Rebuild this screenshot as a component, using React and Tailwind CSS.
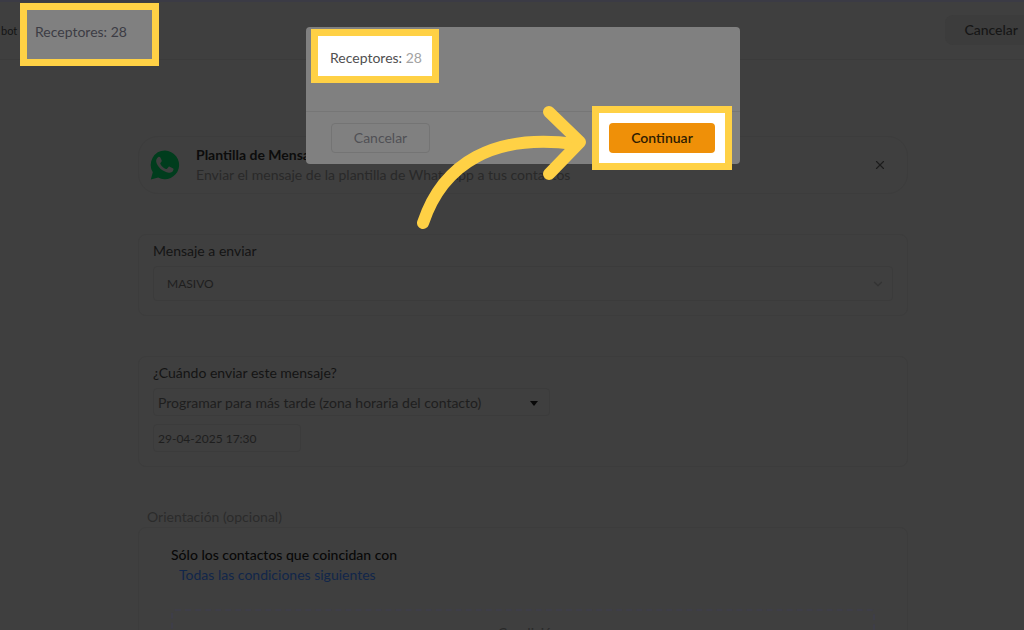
import { ChevronDown, X } from 'lucide-react';

const CARD = 'border border-[#3c3c3c] rounded-lg';
const FIELD = 'border border-[#3b3b3b] rounded bg-transparent text-[#1e1e1e] appearance-none';

const Header = () => (
  <header className="flex items-start h-[60px] border-t-2 border-t-[#3b3b45] border-b border-b-[#3b3b3b]">
    <span className="w-5 shrink-0 pt-[21px] pl-px text-[11px] leading-4 text-[#141414]">bot</span>
    {/* Highlighted counter, hangs a little below the header */}
    <div className="mt-px w-[139px] h-[63px] shrink-0 border-7 border-[#ffd145] bg-[#808080] pl-2 pt-3 leading-5 text-[#3c3c44]">
      Receptores: 28
    </div>
    <button className="ml-auto mt-[13px] h-[30px] rounded-l-lg bg-[#3c3c3c] pl-[19px] pr-1.5 font-medium text-[#161616]">
      Cancelar
    </button>
  </header>
);

const WhatsAppLogo = () => (
  <svg className="w-[30px] h-[30px] shrink-0" viewBox="0 0 30 30" aria-hidden="true">
    <path
      fill="#003d1d"
      d="M15 .6a14.300 14.300 0 1 1-6.800 27L.8 29.400l2-7.200A14.300 14.300 0 0 1 15 .6z"
    />
    <path
      fill="#3f3f3f"
      d="M8 7.200c.8-.6 2-.5 2.500.5l1.100 2.500c.3.700.1 1.200-.3 1.700l-.9 1.100c-.2.300-.2.600 0 1 1.300 2.400 3.100 4 5.600 5 .4.200.7.100 1-.2l1.500-1.800c.3-.4.700-.5 1.200-.3l3.100 1.500c.6.300.8.700.7 1.300-.4 2.300-2.500 3.500-4.700 3.200C12.800 21.800 7.300 17.200 6.200 11.800c-.3-1.800.4-3.500 1.800-4.600z"
    />
  </svg>
);

const MessageHeader = () => (
  <section className="flex items-center h-[58px] border border-[#3c3c3c] rounded-[20px] pl-[11px] pr-5">
    <WhatsAppLogo />
    <div className="ml-4 min-w-0">
      <h2 className="leading-5 font-bold text-[#0c0c0c] whitespace-nowrap">Plantilla de Mensaje de WhatsApp</h2>
      <p className="leading-5 text-[#292929] whitespace-nowrap">
        Enviar el mensaje de la plantilla de WhatsApp a tus contactos
      </p>
    </div>
    <button className="ml-auto" aria-label="Cerrar">
      <X size={14} strokeWidth={2} className="text-[#1c1c1c]" />
    </button>
  </section>
);

const MessageSelect = () => (
  <section className={`${CARD} mt-10 px-3.5 pt-1.5 pb-3.5`}>
    <label htmlFor="mensaje" className="block leading-5 text-[#141414]">
      Mensaje a enviar
    </label>
    <div className="relative mt-[5px]">
      <select id="mensaje" className={`${FIELD} w-full h-[35px] px-[13px] text-xs`}>
        <option>MASIVO</option>
      </select>
      <ChevronDown size={14} className="absolute right-2 top-[11px] text-[#333333] pointer-events-none" />
    </div>
  </section>
);

const Schedule = () => (
  <section className={`${CARD} mt-10 px-3.5 pt-1.5 pb-3.5`}>
    <label htmlFor="cuando" className="block leading-5 text-[#141414]">
      ¿Cuándo enviar este mensaje?
    </label>
    <div className="relative mt-[5px] w-[397px]">
      <select id="cuando" className={`${FIELD} block w-full h-7 px-1 pt-0.5 text-sm`}>
        <option>Programar para más tarde (zona horaria del contacto)</option>
      </select>
      <svg className="absolute right-3 top-[13px] w-2 h-[5px] pointer-events-none" viewBox="0 0 8 5">
        <path d="M0 0h8L4 5z" fill="#080808" />
      </svg>
    </div>
    <input
      type="text"
      aria-label="Fecha y hora"
      defaultValue="29-04-2025 17:30"
      className={`${FIELD} block mt-2 w-[148px] h-7 px-1 text-xs`}
    />
  </section>
);

const Targeting = () => (
  <section>
    <h3 className="mt-10 pl-[9px] leading-5 text-[#2b2b2b]">Orientación (opcional)</h3>
    <div className={`${CARD} px-8 pt-[17px]`}>
      <p className="leading-5 font-medium text-[#080808]">Sólo los contactos que coincidan con</p>
      <a href="#condiciones" className="block w-fit pl-2 leading-5 text-[#11264a]">
        Todas las condiciones siguientes
      </a>
      <div className="mt-6 h-20 border-2 border-dashed border-[#3e3e48] rounded pt-3 text-center leading-5">
        <button className="text-[#292929]">+ Condición</button>
      </div>
    </div>
  </section>
);

const Arrow = () => (
  <svg
    className="absolute left-[104px] top-[71px] w-[184px] h-[140px] pointer-events-none"
    viewBox="410 98 184 140"
    fill="none"
    stroke="#ffd145"
    strokeWidth="12"
    strokeLinecap="round"
    strokeLinejoin="round"
  >
    <path d="M423 223C443 163 494 133 575 144" />
    <path d="M549 112l31 30-31 32" />
  </svg>
);

const ConfirmDialog = () => (
  <div role="dialog" aria-label="Receptores" className="absolute left-[306px] top-[27px] w-[434px] rounded bg-[#808080]">
    <div className="h-[85px] pl-[5px] pt-0.5 border-b border-[#767676]">
      <div className="w-32 h-[54px] border-7 border-[#ffd145] bg-white pl-3 pt-3 leading-5 text-[#505050]">
        Receptores: <span className="text-[#a3a3a3]">28</span>
      </div>
    </div>
    <div className="flex justify-between px-[25px] py-[11px]">
      <button className="w-[99px] h-[30px] border border-[#747474] rounded text-[#505055]">Cancelar</button>
      <div className="-m-[17px] border-7 border-[#ffd145] bg-white p-2.5">
        <button className="block w-[106px] h-[30px] rounded bg-[#ef9008] font-semibold text-[#2e1c02]">
          Continuar
        </button>
      </div>
    </div>
    <Arrow />
  </div>
);

const App = () => (
  <div className="relative h-screen overflow-hidden bg-[#3f3f3f] font-[Lato,sans-serif] text-sm">
    <Header />
    <main className="pl-[138px] pr-[116px] pt-[76px]">
      <MessageHeader />
      <MessageSelect />
      <Schedule />
      <Targeting />
    </main>
    <ConfirmDialog />
  </div>
);

export default App;
